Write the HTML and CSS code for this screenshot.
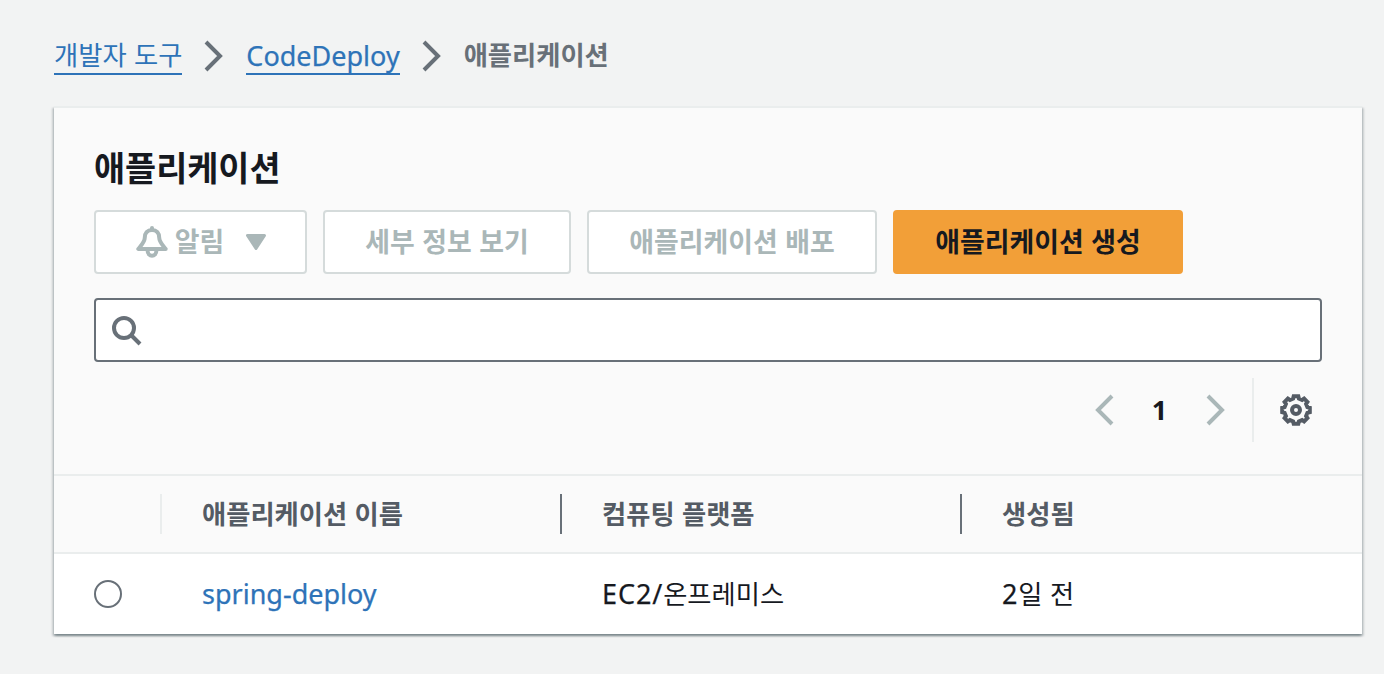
FILE: index.html
```html
<!DOCTYPE html>
<html lang="ko">
<head>
    <meta charset="UTF-8">
    <meta name="viewport" content="width=device-width, initial-scale=1.0">
    <title>CodeDeploy - 애플리케이션</title>
    <link rel="stylesheet" href="styles.css">
</head>
<body>
    <nav class="breadcrumb">
        <a class="crumb" href="#">개발자 도구</a>
        <svg class="chevron" viewBox="0 0 20 32"><path d="M3 2 L17 16 L3 30"/></svg>
        <a class="crumb latin" href="#">CodeDeploy</a>
        <svg class="chevron" viewBox="0 0 20 32"><path d="M3 2 L17 16 L3 30"/></svg>
        <span class="crumb current">애플리케이션</span>
    </nav>

    <main class="panel">
        <div class="panel-header">
            <h1>애플리케이션</h1>
            <div class="actions">
                <button class="btn btn-notify" disabled>
                    <svg class="bell" viewBox="0 0 32 32">
                        <path d="M16 2 V4" />
                        <path d="M16 4 C11.300 4 8.800 7.300 8.800 11.500 C8.800 16 5.500 19 2.300 23 H29.700 C26.500 19 23.200 16 23.200 11.500 C23.200 7.300 20.700 4 16 4 Z"/>
                        <path d="M11.600 24.500 C11.600 31.600 20.400 31.600 20.400 24.500"/>
                    </svg>
                    <span>알림</span>
                    <svg class="caret" viewBox="0 0 20 16"><path d="M1.500 1.500 H18.500 L10 14.500 Z"/></svg>
                </button>
                <button class="btn btn-detail" disabled>세부 정보 보기</button>
                <button class="btn btn-wide" disabled>애플리케이션 배포</button>
                <button class="btn btn-wide btn-primary">애플리케이션 생성</button>
            </div>
            <label class="search">
                <svg viewBox="0 0 32 32"><circle cx="14" cy="14" r="10"/><path d="M21 21 L30 30"/></svg>
                <input type="text">
            </label>
            <div class="toolbar">
                <svg class="page-arrow" viewBox="0 0 20 32"><path d="M18 2 L4 16 L18 30"/></svg>
                <span class="page">1</span>
                <svg class="page-arrow" viewBox="0 0 20 32"><path d="M3 2 L17 16 L3 30"/></svg>
                <span class="divider"></span>
                <svg class="gear" viewBox="-16 -16 32 32">
                    <path d="M-2.300 -13.800 H2.300 L2.900 -11.400 L6.100 -10.100 L8.100 -11.400 L11.400 -8.100 L10.100 -6.100 L11.400 -2.900 L13.800 -2.300 V2.300 L11.400 2.900 L10.100 6.100 L11.400 8.100 L8.100 11.400 L6.100 10.100 L2.900 11.400 L2.300 13.800 H-2.300 L-2.900 11.400 L-6.100 10.100 L-8.100 11.400 L-11.400 8.100 L-10.100 6.100 L-11.400 2.900 L-13.800 2.300 V-2.300 L-11.400 -2.900 L-10.100 -6.100 L-11.400 -8.100 L-8.100 -11.400 L-6.100 -10.100 L-2.900 -11.400 Z"/>
                    <circle r="4"/>
                </svg>
            </div>
        </div>

        <table>
            <thead>
                <tr>
                    <th class="col-select"><div class="head light"></div></th>
                    <th class="col-data"><div class="head">애플리케이션 이름</div></th>
                    <th class="col-data"><div class="head">컴퓨팅 플랫폼</div></th>
                    <th><div class="head last">생성됨</div></th>
                </tr>
            </thead>
            <tbody>
                <tr>
                    <td class="select"><input type="radio" name="app"></td>
                    <td><a class="latin" href="#">spring-deploy</a></td>
                    <td><span class="latin ec2">EC2/</span>온프레미스</td>
                    <td><span class="latin ec2">2</span>일 전</td>
                </tr>
            </tbody>
        </table>
    </main>
</body>
</html>
```
FILE: styles.css
```css
* {
    box-sizing: border-box;
}

body {
    margin: 0;
    padding: 36px 22px 40px 54px;
    background-color: #f2f3f3;
    color: #16191f;
    font-family: "Noto Sans CJK KR", sans-serif;
    font-size: 26.3px;
    line-height: 40px;
}

svg {
    display: block;
    flex: none;
    fill: none;
    stroke: currentColor;
    stroke-width: 4;
}

a {
    color: #2e73b8;
    text-decoration: none;
}

.latin {
    font-family: "Noto Sans", sans-serif;
    font-size: 27px;
    -webkit-text-stroke: 0.25px currentColor;
}

.ec2 {
    letter-spacing: 0.9px;
}

.breadcrumb {
    display: flex;
    height: 40px;
    margin-bottom: 30px;
    color: #687078;
}

.crumb {
    height: 39px;
    line-height: 36px;
    white-space: nowrap;
}

.crumb.latin {
    line-height: 40px;
}

a.crumb {
    border-bottom: 2px solid #2e73b8;
}

.current {
    font-weight: 700;
}

.chevron {
    width: 20px;
    height: 32px;
    margin: 4px 23px 0 21px;
}

.panel {
    border-top: 2px solid #eaeded;
    background-color: #fff;
    box-shadow: 0 2px 2px rgba(0, 28, 36, 0.3), 2px 2px 2px rgba(0, 28, 36, 0.15), -2px 2px 2px rgba(0, 28, 36, 0.15);
}

.panel-header {
    height: 368px;
    padding: 37px 40px 0;
    background-color: #fafafa;
    border-bottom: 2px solid #eaeded;
}

h1 {
    margin: 0 0 21px;
    font-size: 33.8px;
    line-height: 44px;
}

.actions {
    display: flex;
    gap: 16px;
    margin-bottom: 24px;
}

.btn {
    display: flex;
    align-items: center;
    justify-content: center;
    height: 64px;
    padding: 0 0 3px;
    border: 2px solid #d5dbdb;
    border-radius: 4px;
    background-color: #fff;
    color: #aab7b8;
    font: inherit;
    font-size: 26.9px;
    font-weight: 700;
    white-space: nowrap;
}

.btn-notify {
    width: 213px;
    padding-left: 1px;
}

.btn-detail {
    width: 248px;
}

.btn-wide {
    width: 290px;
}

.btn-primary {
    border-color: #f29f38;
    background-color: #f29f38;
    color: #16191f;
}

.bell {
    width: 32px;
    height: 32px;
    margin: 3px 7px 0 0;
    stroke-linejoin: round;
    stroke-linecap: round;
}

.caret {
    width: 20px;
    height: 16px;
    margin: 3px 0 0 22px;
    fill: currentColor;
    stroke-width: 3;
    stroke-linejoin: round;
}

.search {
    display: flex;
    align-items: center;
    height: 64px;
    padding: 0 14px;
    border: 2px solid #687078;
    border-radius: 4px;
    background-color: #fff;
    color: #687078;
}

.search svg {
    width: 32px;
    height: 32px;
}

.search input {
    flex: 1;
    border: 0;
    outline: 0;
    font: inherit;
}

.toolbar {
    display: flex;
    align-items: center;
    justify-content: flex-end;
    height: 64px;
    margin-top: 16px;
    padding-right: 10px;
}

.page-arrow {
    width: 20px;
    height: 32px;
    color: #aab7b8;
}

.page {
    width: 91px;
    text-align: center;
    font-family: "Open Sans", sans-serif;
    font-size: 27px;
    font-weight: 700;
}

.divider {
    width: 2px;
    height: 64px;
    margin: 0 26px 0 27px;
    background-color: #eaeded;
}

.gear {
    width: 32px;
    height: 32px;
    color: #545b64;
}

table {
    width: 100%;
    border-collapse: separate;
    border-spacing: 0;
    table-layout: fixed;
}

th {
    height: 78px;
    padding: 0;
    background-color: #fafafa;
    border-bottom: 2px solid #eaeded;
    color: #545b64;
    text-align: left;
}

.col-select {
    width: 108px;
}

.col-data {
    width: 400px;
}

.head {
    height: 40px;
    padding-left: 40px;
    border-right: 2px solid #687078;
    line-height: 37px;
}

.head.light {
    border-color: #eaeded;
}

.head.last {
    border: 0;
}

td {
    height: 80px;
    padding: 0 0 2px 40px;
    white-space: nowrap;
}

.select {
    padding-bottom: 0;
}

input[type="radio"] {
    display: block;
    appearance: none;
    width: 28px;
    height: 28px;
    margin: 0;
    border: 2px solid #687078;
    border-radius: 50%;
}
```
